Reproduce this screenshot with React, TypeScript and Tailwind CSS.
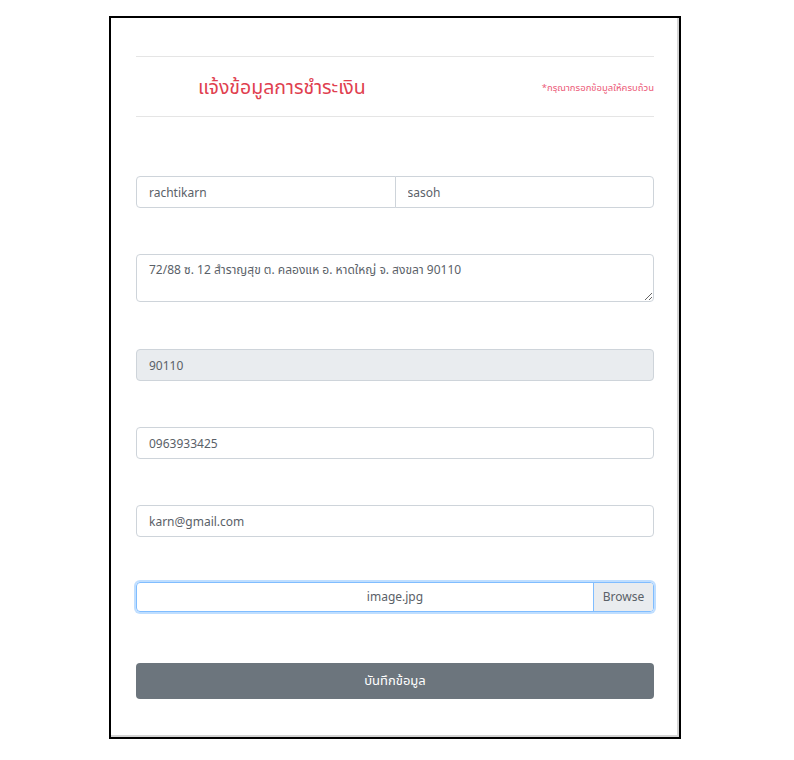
import { useState } from "react";

const font = { fontFamily: '"Noto Sans", "Noto Sans Thai", sans-serif' };

export default function App() {
  const [first, setFirst] = useState("rachtikarn");
  const [last, setLast] = useState("sasoh");
  const [addr, setAddr] = useState("72/88 ซ. 12 สำราญสุข ต. คลองแห อ. หาดใหญ่ จ. สงขลา 90110");
  const [phone, setPhone] = useState("0963933425");
  const [email, setEmail] = useState("karn@gmail.com");

  const field =
    "h-[32px] w-full rounded-[4px] border border-[#ced4da] px-[12px] text-[12px] text-[#5a6168] outline-none";

  return (
    <div className="min-h-[760px] bg-white pt-[16px]" style={font}>
      <div className="ml-[109px] w-[572px] border-2 border-black bg-white px-[25px] pt-[38px] pb-[38px] shadow-[inset_-2px_-2px_0_#d4d4d4]">
        {/* header */}
        <div className="flex h-[61px] items-center justify-between border-y border-[#e5e5e5] pl-[62px]">
          <h1 className="text-[19.5px] font-normal text-[#e0404f]">แจ้งข้อมูลการชำระเงิน</h1>
          <span className="mt-[4px] text-[9.5px] text-[#ec5a78]">*กรุณากรอกข้อมูลให้ครบถ้วน</span>
        </div>

        <div className="mt-[59px] flex flex-col">
          <div className="flex">
            <input
              value={first}
              onChange={(e) => setFirst(e.target.value)}
              className={field + " rounded-r-none bg-white"}
            />
            <input
              value={last}
              onChange={(e) => setLast(e.target.value)}
              className={field + " -ml-px rounded-l-none bg-white"}
            />
          </div>

          <textarea
            value={addr}
            onChange={(e) => setAddr(e.target.value)}
            className="mt-[46px] h-[48px] w-full rounded-[4px] border border-[#ced4da] bg-white px-[12px] py-[6px] text-[12px] leading-[18px] text-[#5a6168] outline-none"
          />

          <input value="90110" disabled className={field + " mt-[47px] bg-[#e9ecef]"} />

          <input
            value={phone}
            onChange={(e) => setPhone(e.target.value)}
            className={field + " mt-[46px] bg-white"}
          />

          <input
            value={email}
            onChange={(e) => setEmail(e.target.value)}
            className={field + " mt-[46px] bg-white"}
          />

          <div className="mt-[45px] flex h-[30px] w-full overflow-hidden rounded-[4px] border border-[#80bdff] shadow-[0_0_0_2px_rgba(0,123,255,0.25)]">
            <div className="flex flex-1 items-center justify-center pl-[60px] text-[12px] text-[#5a6168]">
              image.jpg
            </div>
            <div className="flex w-[60px] items-center justify-center border-l border-[#80bdff] bg-[#e9ecef] text-[12px] text-[#5a6168]">
              Browse
            </div>
          </div>

          <button className="mt-[51px] h-[36px] w-full rounded-[4px] bg-[#6c757d] text-[13px] text-white">
            บันทึกข้อมูล
          </button>
        </div>
      </div>
    </div>
  );
}
